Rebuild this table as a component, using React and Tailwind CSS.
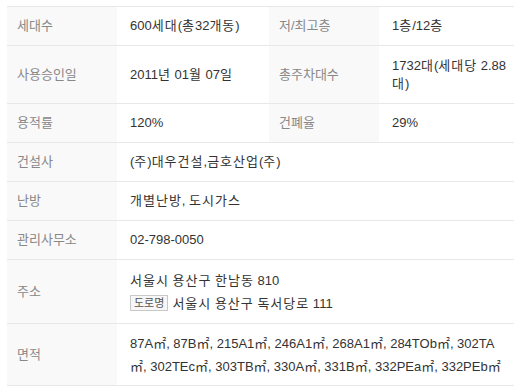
import React from "react";

const font = { fontFamily: '"Liberation Sans", "Noto Sans CJK KR", sans-serif' };

function K({ children }) {
  const parts = String(children).split(/([\uAC00-\uD7A3]+)/);
  return (
    <span>
      {parts.map((p, i) =>
        /[\uAC00-\uD7A3]/.test(p) ? (
          <span key={i} className="tracking-[1px]">
            {p}
          </span>
        ) : (
          <React.Fragment key={i}>{p}</React.Fragment>
        )
      )}
    </span>
  );
}

function Label({ children }) {
  return (
    <div className="bg-[#f9f9f9] text-[#888888] pl-[10px] flex items-center">
      {children}
    </div>
  );
}

function Value({ children, className = "" }) {
  return (
    <div className={"text-[#333333] pl-[13px] flex items-center " + className}>
      {children}
    </div>
  );
}

export default function App() {
  return (
    <div className="w-[522px] h-[389px] bg-white overflow-hidden" style={font}>
      <div className="ml-[7px] mt-[6px] w-[507px] border-t border-[#e8e8e8] text-[13px] leading-[18px]">
        <div className="grid grid-cols-[110px_152px_110px_135px] h-[39px] border-b border-[#e8e8e8]">
          <Label>세대수</Label>
          <Value><K>600세대(총32개동)</K></Value>
          <Label>저/최고층</Label>
          <Value><K>1층/12층</K></Value>
        </div>
        <div className="grid grid-cols-[110px_152px_110px_135px] h-[58px] border-b border-[#e8e8e8]">
          <Label>사용승인일</Label>
          <Value><K>2011년 01월 07일</K></Value>
          <Label>총주차대수</Label>
          <Value><div><K>1732대(세대당 2.88</K><br /><K>대)</K></div></Value>
        </div>
        <div className="grid grid-cols-[110px_152px_110px_135px] h-[39px] border-b border-[#e8e8e8]">
          <Label>용적률</Label>
          <Value>120%</Value>
          <Label>건폐율</Label>
          <Value>29%</Value>
        </div>
        <div className="grid grid-cols-[110px_397px] h-[39px] border-b border-[#e8e8e8]">
          <Label>건설사</Label>
          <Value><K>(주)대우건설,금호산업(주)</K></Value>
        </div>
        <div className="grid grid-cols-[110px_397px] h-[39px] border-b border-[#e8e8e8]">
          <Label>난방</Label>
          <Value><K>개별난방, 도시가스</K></Value>
        </div>
        <div className="grid grid-cols-[110px_397px] h-[39px] border-b border-[#e8e8e8]">
          <Label>관리사무소</Label>
          <Value>02-798-0050</Value>
        </div>
        <div className="grid grid-cols-[110px_397px] h-[64px] border-b border-[#e8e8e8]">
          <Label>주소</Label>
          <Value>
            <div className="leading-[23px]">
              <div><K>서울시 용산구 한남동 810</K></div>
              <div className="flex items-center">
                <span className="inline-flex items-center h-[16px] px-[3px] mr-[4px] border border-[#c8c8c8] bg-[#f7f7f7] text-[#555555] text-[11px] leading-[14px]">
                  도로명
                </span>
                <K>서울시 용산구 독서당로 111</K>
              </div>
            </div>
          </Value>
        </div>
        <div className="grid grid-cols-[110px_397px] h-[62px] border-b border-[#e8e8e8]">
          <Label>면적</Label>
          <Value className="pr-[13px]">
            <div className="leading-[23px]">
              87A㎡, 87B㎡, 215A1㎡, 246A1㎡, 268A1㎡, 284TOb㎡, 302TA㎡, 302TEc㎡, 303TB㎡, 330A㎡, 331B㎡, 332PEa㎡, 332PEb㎡
            </div>
          </Value>
        </div>
      </div>
    </div>
  );
}
